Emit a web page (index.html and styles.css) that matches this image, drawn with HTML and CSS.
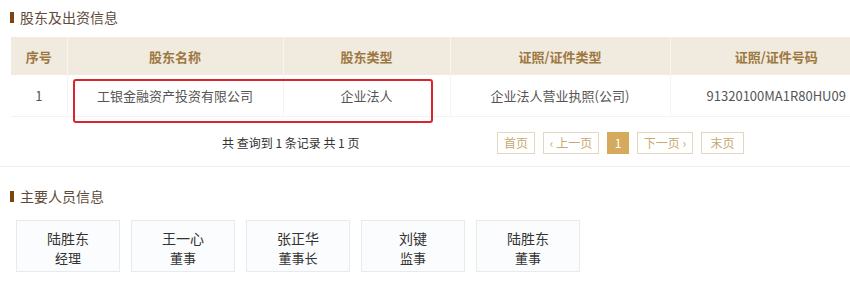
FILE: index.html
```html
<!DOCTYPE html>
<html lang="zh-CN">
<head>
<meta charset="utf-8">
<title>股东及出资信息</title>
<link rel="stylesheet" href="styles.css">
</head>
<body>
<div class="page">
  <h2 class="sec-title"><span class="bar"></span>股东及出资信息</h2>
  <div class="table-wrap">
    <table class="grid">
      <colgroup>
        <col class="c1"><col class="c2"><col class="c3"><col class="c4"><col class="c5">
      </colgroup>
      <thead>
        <tr><th>序号</th><th>股东名称</th><th>股东类型</th><th>证照/证件类型</th><th>证照/证件号码</th></tr>
      </thead>
      <tbody>
        <tr><td>1</td><td>工银金融资产投资有限公司</td><td>企业法人</td><td>企业法人营业执照(公司)</td><td>91320100MA1R80HU09</td></tr>
      </tbody>
    </table>
    <div class="highlight"></div>
  </div>
  <div class="pager">
    <span class="summary">共 查询到 1 条记录 共 1 页</span>
    <div class="pages">
      <span class="pbtn first">首页</span>
      <span class="pbtn wide">‹ 上一页</span>
      <span class="pbtn active">1</span>
      <span class="pbtn wide">下一页 ›</span>
      <span class="pbtn last">末页</span>
    </div>
  </div>
  <h2 class="sec-title second"><span class="bar"></span>主要人员信息</h2>
  <div class="people">
    <div class="card"><div class="name">陆胜东</div><div class="role">经理</div></div>
    <div class="card"><div class="name">王一心</div><div class="role">董事</div></div>
    <div class="card"><div class="name">张正华</div><div class="role">董事长</div></div>
    <div class="card"><div class="name">刘键</div><div class="role">监事</div></div>
    <div class="card"><div class="name">陆胜东</div><div class="role">董事</div></div>
  </div>
</div>
</body>
</html>
```
FILE: styles.css
```css
html, body {
  margin: 0;
  padding: 0;
  background: #ffffff;
  overflow: hidden;
}
body {
  width: 850px;
  font-family: "Noto Sans CJK SC", "Noto Sans", "Liberation Sans", sans-serif;
  color: #333;
}
.page {
  padding-top: 7px;
}
.sec-title {
  margin: 0 0 0 10px;
  display: flex;
  align-items: center;
  font-size: 14px;
  line-height: 20px;
  font-weight: normal;
  color: #5e4c3a;
}
.sec-title .bar {
  display: inline-block;
  width: 4px;
  height: 11px;
  background: #7a4610;
  margin-right: 6px;
}
.sec-title.second {
  margin-top: 19px;
}
.table-wrap {
  position: relative;
  margin: 10px 0 0 11px;
  width: 871px;
}
.grid {
  border-collapse: collapse;
  table-layout: fixed;
  width: 871px;
  font-size: 13px;
}
.c1 { width: 56px; }
.c2 { width: 216px; }
.c3 { width: 167px; }
.c4 { width: 220px; }
.c5 { width: 212px; }
.grid th {
  height: 38px;
  padding: 0;
  background: #f1eadf;
  color: #9c7840;
  font-weight: bold;
  text-align: center;
  border-left: 1px solid #f8f4ee;
}
.grid th:first-child, .grid td:first-child { border-left: none; }
.grid td {
  height: 41px;
  padding: 0;
  text-align: center;
  color: #555;
  border-left: 1px solid #f4f4f4;
  border-bottom: 1px solid #f2f2f2;
}
.highlight {
  position: absolute;
  left: 62px;
  top: 42px;
  width: 356px;
  height: 40px;
  border: 2px solid #d8262c;
  border-radius: 3px;
}
.pager {
  display: flex;
  align-items: center;
  padding: 15px 0 12px;
  border-bottom: 1px solid #f1f1f1;
}
.summary {
  width: 127px;
  margin-left: 222px;
  white-space: nowrap;
  font-size: 12px;
  line-height: 22px;
  color: #333;
}
.pages {
  display: flex;
  gap: 8px;
  margin-left: 148px;
}
.pbtn {
  box-sizing: border-box;
  height: 22px;
  line-height: 20px;
  padding: 0;
  border: 1px solid #e3d7c0;
  font-size: 12px;
  color: #c9a870;
  text-align: center;
}
.pbtn.first { width: 38px; }
.pbtn.last { width: 43px; }
.pbtn.wide { width: 56px; }
.pbtn.active {
  width: 22px;
  background: #d6aa5c;
  border-color: #d6aa5c;
  color: #fff;
}
.people {
  display: flex;
  gap: 11px;
  margin: 14px 0 0 16px;
}
.card {
  box-sizing: border-box;
  width: 104px;
  height: 52px;
  padding-top: 7px;
  border: 1px solid #e7ebee;
  background: #fbfcfd;
  text-align: center;
  color: #333;
}
.card .name {
  font-size: 14px;
  line-height: 20px;
}
.card .role {
  font-size: 13px;
  line-height: 20px;
}
```
